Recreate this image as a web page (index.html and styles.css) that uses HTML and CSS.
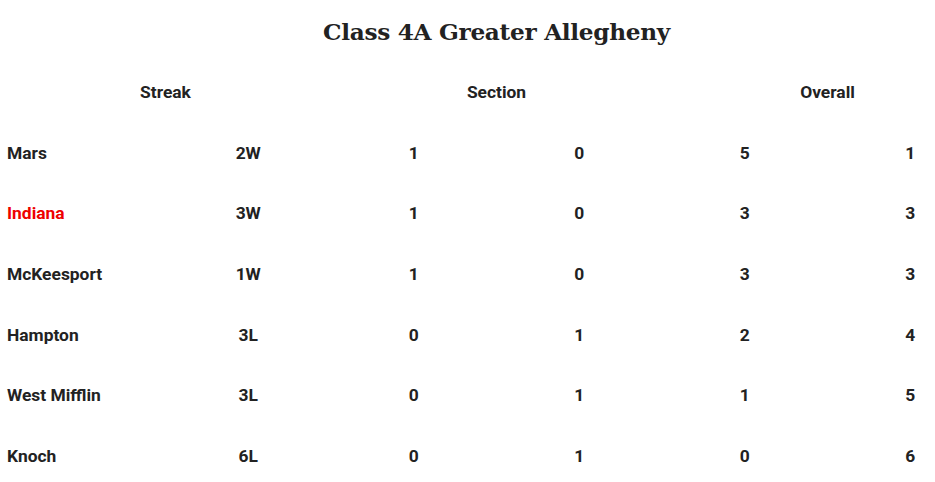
FILE: index.html
```html
<!DOCTYPE html>
<html lang="en">
<head>
<meta charset="utf-8">
<title>Class 4A Greater Allegheny</title>
<link rel="stylesheet" href="styles.css">
</head>
<body>
<div class="viewport">
<div class="page">
  <h1 class="title">Class 4A Greater Allegheny</h1>
  <table class="standings">
    <thead>
      <tr>
        <th colspan="2">Streak</th>
        <th colspan="2">Section</th>
        <th colspan="2">Overall</th>
      </tr>
    </thead>
    <tbody>
      <tr><td class="team">Mars</td><td>2W</td><td>1</td><td>0</td><td>5</td><td>1</td></tr>
      <tr><td class="team highlight">Indiana</td><td>3W</td><td>1</td><td>0</td><td>3</td><td>3</td></tr>
      <tr><td class="team">McKeesport</td><td>1W</td><td>1</td><td>0</td><td>3</td><td>3</td></tr>
      <tr><td class="team">Hampton</td><td>3L</td><td>0</td><td>1</td><td>2</td><td>4</td></tr>
      <tr><td class="team">West Mifflin</td><td>3L</td><td>0</td><td>1</td><td>1</td><td>5</td></tr>
      <tr><td class="team">Knoch</td><td>6L</td><td>0</td><td>1</td><td>0</td><td>6</td></tr>
    </tbody>
  </table>
</div>
</div>
</body>
</html>
```
FILE: styles.css
```css
html, body {
  margin: 0;
  padding: 0;
  background: #ffffff;
  overflow: hidden;
}
.viewport {
  width: 935px;
  overflow: hidden;
}
.page {
  width: 993px;
  color: #222222;
  font-family: Roboto, "Liberation Sans", sans-serif;
}
.title {
  margin: 0;
  height: 62px;
  display: flex;
  align-items: center;
  justify-content: center;
  font-family: "DejaVu Serif", "Liberation Serif", serif;
  font-weight: 700;
  font-size: 23.2px;
  letter-spacing: -0.3px;
  color: #222222;
}
.standings {
  width: 993px;
  border-collapse: collapse;
  table-layout: fixed;
  font-size: 17.4px;
  font-weight: 700;
}
.standings th,
.standings td {
  height: 60.6px;
  padding: 0 7px;
  text-align: center;
  vertical-align: middle;
}
.standings th {
  font-weight: 700;
}
.standings td.team {
  text-align: left;
}
.standings td.highlight {
  color: #ee0000;
}
```
